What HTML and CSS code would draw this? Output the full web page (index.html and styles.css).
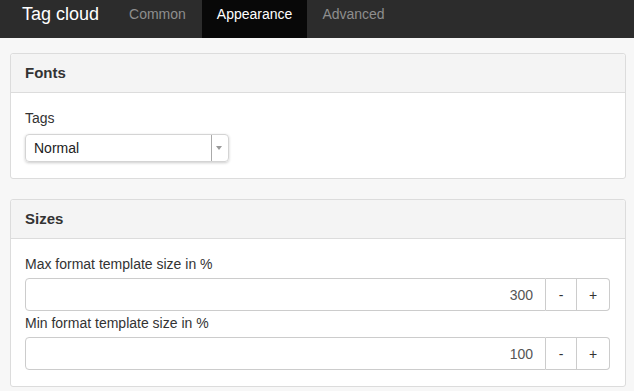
FILE: index.html
```html
<!DOCTYPE html>
<html lang="en">
<head>
  <meta charset="UTF-8">
  <title>Tag cloud</title>
  <link rel="stylesheet" href="styles.css">
</head>
<body>

<!-- top navigation -->
<div class="navbar">
  <span class="brand">Tag cloud</span>
  <a class="tab">Common</a>
  <a class="tab active">Appearance</a>
  <a class="tab">Advanced</a>
</div>

<div class="content">

  <!-- fonts -->
  <div class="panel">
    <div class="panel-heading">Fonts</div>
    <div class="panel-body">
      <label class="field-label">Tags</label>
      <div class="select">
        <span class="select-value">Normal</span>
        <span class="select-arrow"></span>
      </div>
    </div>
  </div>

  <!-- sizes -->
  <div class="panel">
    <div class="panel-heading">Sizes</div>
    <div class="panel-body">
      <label class="field-label tight">Max format template size in %</label>
      <div class="spinner">
        <input type="text" value="300" />
        <button class="minus">-</button>
        <button class="plus">+</button>
      </div>
      <label class="field-label tight second">Min format template size in %</label>
      <div class="spinner">
        <input type="text" value="100" />
        <button class="minus">-</button>
        <button class="plus">+</button>
      </div>
    </div>
  </div>

</div>

</body>
</html>
```

FILE: styles.css
```css
body {
  margin: 0; background-color: #f7f7f7;
  font-family: "Liberation Sans", Arial, sans-serif; color: #333;
}

.navbar {
  display: flex; height: 38px; background-color: #2c2c2c; padding-left: 7px;
}
.brand {
  padding: 4px 15px 0; font-size: 18px; line-height: 20px; color: #fff;
}
.tab {
  padding: 5px 15px 0; font-size: 14px; line-height: 18px; color: #8e8e8e;
}
.tab.active { background-color: #080808; color: #fff; margin-left: 1px; }

.content { padding: 15px 8px 0 10px; }

.panel {
  background-color: #fff; border: 1px solid #dcdcdc; border-radius: 3px;
  margin-bottom: 20px;
}
.panel-heading {
  background-color: #f4f4f4; border-bottom: 1px solid #dcdcdc;
  padding: 10px 14px; font-size: 15px; line-height: 18px; font-weight: bold;
  border-radius: 3px 3px 0 0;
}
.panel-body { padding: 15px 15px 16px 14px; }

.field-label {
  display: block; font-size: 14px; line-height: 20px; margin-bottom: 6px;
}
.field-label.tight { margin-bottom: 4px; }
.field-label.second { margin-top: 2px; }

.select {
  display: flex; width: 202px; height: 26px; border: 1px solid #d4d4d4;
  border-radius: 4px; box-shadow: 0 1px 3px rgba(0, 0, 0, 0.2);
}
.select-value {
  flex: 1; padding-left: 8px; font-size: 14px; line-height: 26px; color: #222;
  border-right: 1px solid #aaa;
}
.select-arrow {
  width: 16px; position: relative;
}
.select-arrow::after {
  content: ""; position: absolute; left: 4px; top: 11px;
  border-left: 3px solid transparent; border-right: 3px solid transparent;
  border-top: 4px solid #999;
}

.spinner { display: flex; height: 33px; }
.spinner input {
  flex: 1; min-width: 0; box-sizing: border-box; height: 33px;
  border: 1px solid #ccc; border-radius: 4px 0 0 4px; padding: 0 12px;
  font-family: inherit; font-size: 14px; color: #555; text-align: right;
}
.spinner button {
  height: 33px; border: 1px solid #ccc; border-left: none; background-color: #fff;
  font-family: inherit; font-size: 14px; color: #333; padding: 0;
}
.spinner .minus { width: 31px; }
.spinner .plus { width: 33px; border-radius: 0 4px 4px 0; }
```
